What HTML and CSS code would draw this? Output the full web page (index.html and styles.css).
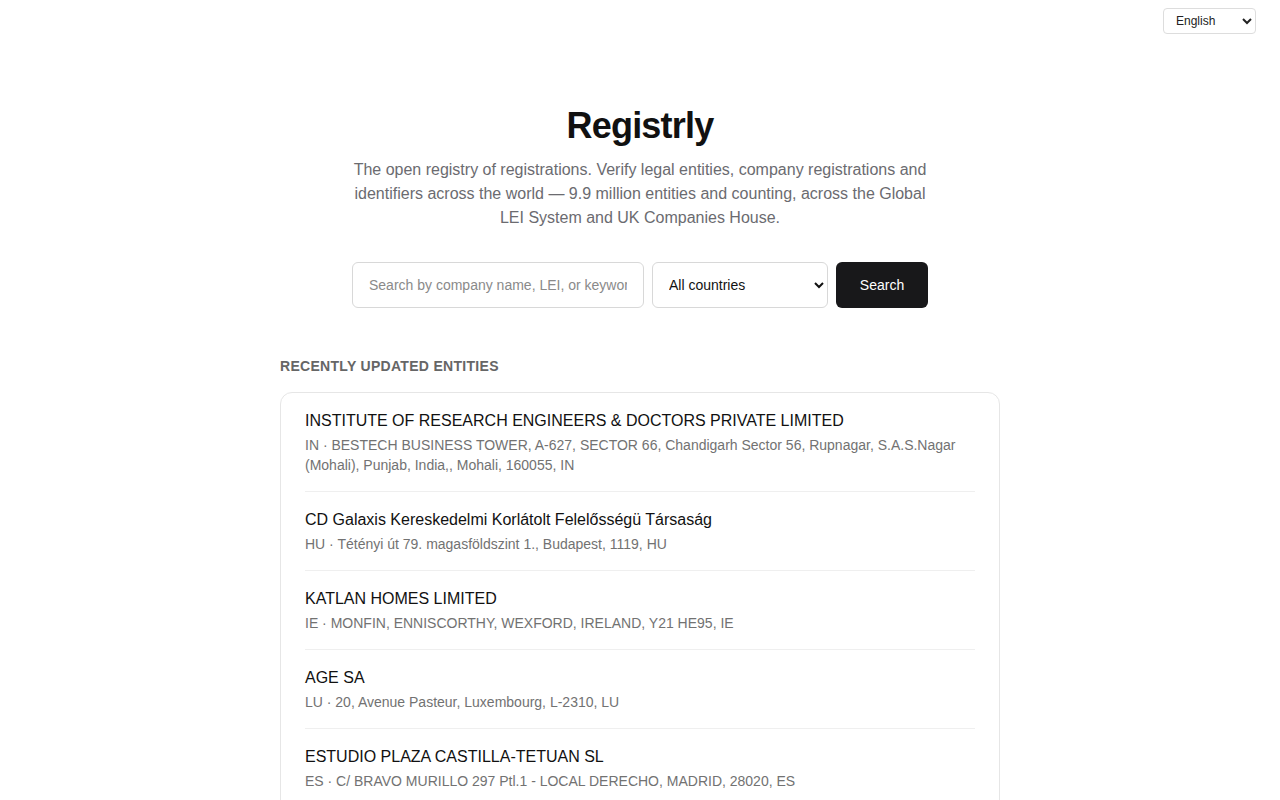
FILE: index.html
```html
<!DOCTYPE html>
<html lang="en">
<head>
    <meta charset="UTF-8">
    <meta name="viewport" content="width=device-width, initial-scale=1.0">
    <title>Registrly</title>
    <link rel="stylesheet" href="styles.css">
</head>
<body>
    <div class="lang-bar">
        <select class="lang-select">
            <option>English</option>
        </select>
    </div>

    <header class="hero">
        <h1>Registrly</h1>
        <p class="tagline">The open registry of registrations. Verify legal entities, company registrations and identifiers across the world — 9.9 million entities and counting, across the Global LEI System and UK Companies House.</p>

        <form class="search-form">
            <input type="text" class="search-input" placeholder="Search by company name, LEI, or keyword">
            <select class="country-select">
                <option>All countries</option>
            </select>
            <button type="submit" class="search-btn">Search</button>
        </form>
    </header>

    <div class="container">
        <h2 class="section-title">Recently updated entities</h2>
        <div class="entity-list">
            <a href="#" class="entity">
                <div class="entity-name">INSTITUTE OF RESEARCH ENGINEERS &amp; DOCTORS PRIVATE LIMITED</div>
                <div class="entity-meta">IN · BESTECH BUSINESS TOWER, A-627, SECTOR 66, Chandigarh Sector 56, Rupnagar, S.A.S.Nagar (Mohali), Punjab, India,, Mohali, 160055, IN</div>
            </a>
            <a href="#" class="entity">
                <div class="entity-name">CD Galaxis Kereskedelmi Korlátolt Felelősségü Társaság</div>
                <div class="entity-meta">HU · Tétényi út 79. magasföldszint 1., Budapest, 1119, HU</div>
            </a>
            <a href="#" class="entity">
                <div class="entity-name">KATLAN HOMES LIMITED</div>
                <div class="entity-meta">IE · MONFIN, ENNISCORTHY, WEXFORD, IRELAND, Y21 HE95, IE</div>
            </a>
            <a href="#" class="entity">
                <div class="entity-name">AGE SA</div>
                <div class="entity-meta">LU · 20, Avenue Pasteur, Luxembourg, L-2310, LU</div>
            </a>
            <a href="#" class="entity">
                <div class="entity-name">ESTUDIO PLAZA CASTILLA-TETUAN SL</div>
                <div class="entity-meta">ES · C/ BRAVO MURILLO 297 Ptl.1 - LOCAL DERECHO, MADRID, 28020, ES</div>
            </a>
            <a href="#" class="entity">
                <div class="entity-name">NORTHBRIDGE CAPITAL PARTNERS LLP</div>
                <div class="entity-meta">GB · 10 Queen Street Place, London, EC4R 1BE, GB</div>
            </a>
        </div>
    </div>
</body>
</html>
```

FILE: styles.css
```css
* {
    margin: 0;
    padding: 0;
    box-sizing: border-box;
}

body {
    font-family: 'Liberation Sans', Arial, sans-serif;
    background-color: #fff;
    color: #111;
}

.lang-bar {
    display: flex;
    justify-content: flex-end;
    padding: 8px 24px 0;
}

.lang-select {
    width: 93px;
    height: 26px;
    padding: 0 4px 0 8px;
    font-family: inherit;
    font-size: 12px;
    color: #222;
    background-color: #fff;
    border: 1px solid #ddd;
    border-radius: 4px;
}

.hero {
    text-align: center;
    padding-top: 70px;
}

.hero h1 {
    font-size: 36px;
    font-weight: bold;
    letter-spacing: -0.8px;
    line-height: 44px;
    color: #111;
}

.tagline {
    max-width: 580px;
    margin: 10px auto 0;
    font-size: 16px;
    line-height: 24px;
    color: #6b6b70;
}

.search-form {
    display: flex;
    justify-content: center;
    gap: 8px;
    margin-top: 32px;
}

.search-input {
    width: 292px;
    height: 46px;
    padding: 0 16px;
    font-family: inherit;
    font-size: 14px;
    border: 1px solid #d8d8d8;
    border-radius: 6px;
    color: #111;
}

.search-input::placeholder {
    color: #8a8a8a;
}

.country-select {
    width: 176px;
    height: 46px;
    padding: 0 12px;
    font-family: inherit;
    font-size: 14px;
    color: #111;
    background-color: #fff;
    border: 1px solid #d8d8d8;
    border-radius: 6px;
}

.search-btn {
    width: 92px;
    height: 46px;
    font-family: inherit;
    font-size: 14px;
    color: #fff;
    background-color: #18181a;
    border: none;
    border-radius: 6px;
    cursor: pointer;
}

.container {
    max-width: 720px;
    margin: 0 auto;
    padding-top: 50px;
}

.section-title {
    font-size: 14px;
    font-weight: bold;
    text-transform: uppercase;
    letter-spacing: 0.3px;
    color: #666;
    line-height: 16px;
    margin-bottom: 18px;
}

.entity-list {
    border: 1px solid #e6e6e6;
    border-radius: 12px;
    padding: 0 24px;
}

.entity {
    display: block;
    padding: 16px 0;
    border-bottom: 1px solid #efefef;
    text-decoration: none;
}

.entity:last-child {
    border-bottom: none;
}

.entity-name {
    font-size: 16px;
    line-height: 24px;
    color: #111;
}

.entity-meta {
    margin-top: 2px;
    font-size: 14px;
    line-height: 20px;
    color: #727272;
}
```
